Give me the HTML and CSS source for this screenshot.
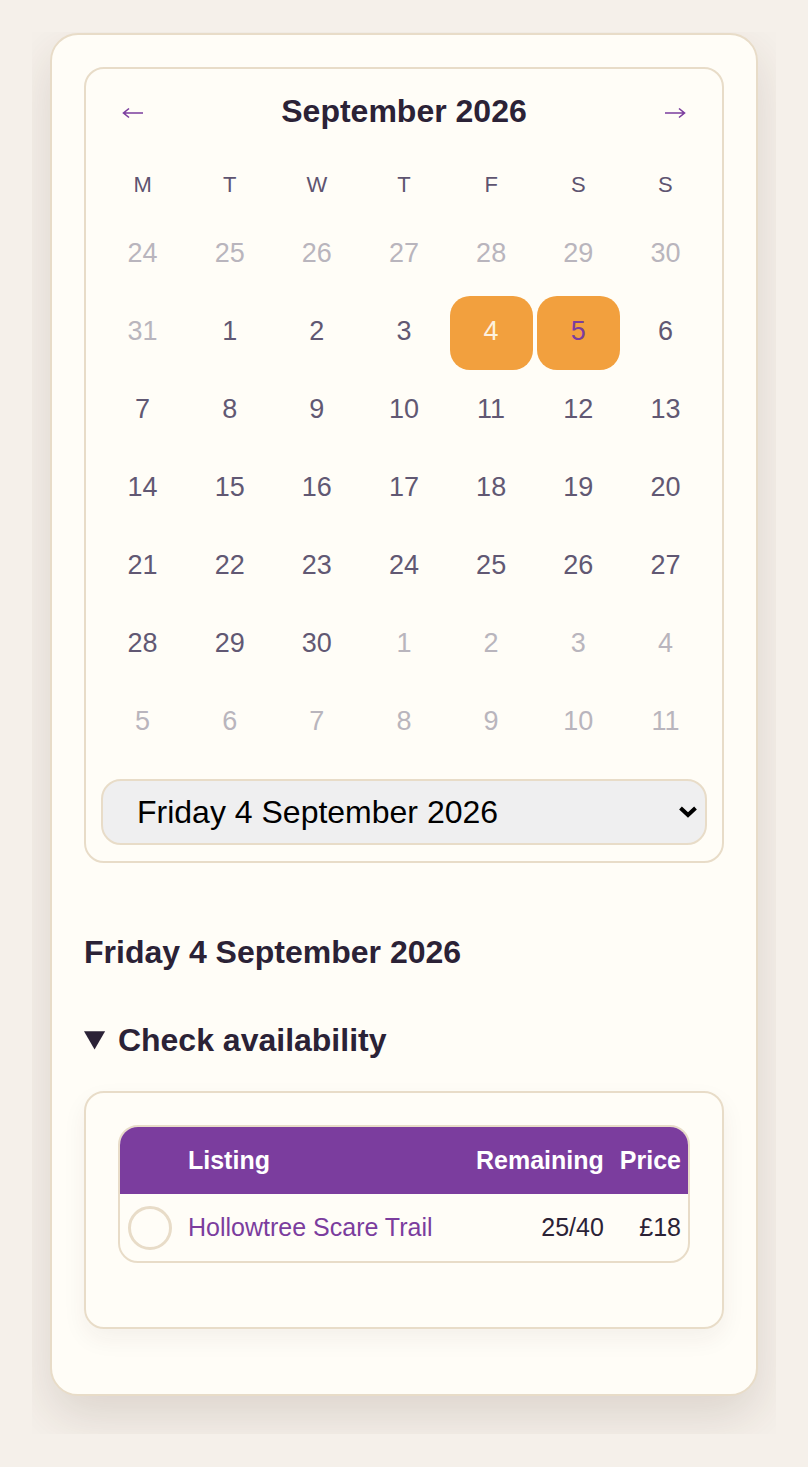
FILE: index.html
```html
<!DOCTYPE html>
<html lang="en">
<head>
    <meta charset="UTF-8">
    <meta name="viewport" content="width=device-width, initial-scale=1.0">
    <title>Book a date</title>
    <link rel="stylesheet" href="styles.css">
</head>
<body>

<div class="page">
    <div class="card">

        <div class="calendar">
            <div class="cal-head">
                <button class="nav" aria-label="Previous month">
                    <svg width="22" height="12" viewBox="0 0 22 12"><path d="M21 6H2M7 1.5L1.5 6L7 10.5" fill="none" stroke="currentColor" stroke-width="1.6"/></svg>
                </button>
                <h1>September 2026</h1>
                <button class="nav" aria-label="Next month">
                    <svg width="22" height="12" viewBox="0 0 22 12"><path d="M1 6H20M15 1.5L20.5 6L15 10.5" fill="none" stroke="currentColor" stroke-width="1.6"/></svg>
                </button>
            </div>

            <div class="weekdays">
                <span>M</span><span>T</span><span>W</span><span>T</span><span>F</span><span>S</span><span>S</span>
            </div>

            <div class="days">
                <span class="out">24</span><span class="out">25</span><span class="out">26</span><span class="out">27</span><span class="out">28</span><span class="out">29</span><span class="out">30</span>
                <span class="out">31</span><span>1</span><span>2</span><span>3</span><span class="picked">4</span><span class="picked alt">5</span><span>6</span>
                <span>7</span><span>8</span><span>9</span><span>10</span><span>11</span><span>12</span><span>13</span>
                <span>14</span><span>15</span><span>16</span><span>17</span><span>18</span><span>19</span><span>20</span>
                <span>21</span><span>22</span><span>23</span><span>24</span><span>25</span><span>26</span><span>27</span>
                <span>28</span><span>29</span><span>30</span><span class="out">1</span><span class="out">2</span><span class="out">3</span><span class="out">4</span>
                <span class="out">5</span><span class="out">6</span><span class="out">7</span><span class="out">8</span><span class="out">9</span><span class="out">10</span><span class="out">11</span>
            </div>

            <div class="select-wrap">
                <select class="date-select">
                    <option>Friday 4 September 2026</option>
                    <option>Saturday 5 September 2026</option>
                </select>
                <svg class="chevron" width="20" height="12" viewBox="0 0 20 12"><path d="M2.5 2L10 9L17.5 2" fill="none" stroke="#000" stroke-width="4"/></svg>
            </div>
        </div>

        <h2>Friday 4 September 2026</h2>

        <details open>
            <summary>Check availability</summary>
            <div class="avail">
                <table>
                    <thead>
                        <tr>
                            <th></th>
                            <th class="name">Listing</th>
                            <th class="num left">Remaining</th>
                            <th class="num">Price</th>
                        </tr>
                    </thead>
                    <tbody>
                        <tr>
                            <td><span class="radio"></span></td>
                            <td class="name"><a href="#">Hollowtree Scare Trail</a></td>
                            <td class="num left">25/40</td>
                            <td class="num">&pound;18</td>
                        </tr>
                    </tbody>
                </table>
            </div>
        </details>

    </div>
</div>

</body>
</html>
```

FILE: styles.css
```css
body {
    font-family: "Liberation Sans", Arial, sans-serif;
    margin: 0;
    background-color: #f5f0ea;
    color: #2b2236;
}
.page {
    margin: 32px 32px 0;
    padding: 1px 18px 38px;
    overflow: hidden;
}
.card {
    background-color: #fffdf7;
    border: 2px solid #e8dcc8;
    border-radius: 28px;
    padding: 32px 32px 65px;
    box-shadow: 0 20px 48px rgba(70, 40, 30, 0.14);
}
.calendar {
    border: 2px solid #e8dcc8;
    border-radius: 20px;
    padding: 15px 15px 16px;
}
.cal-head {
    display: flex;
    align-items: center;
    justify-content: space-between;
    height: 54px;
    margin-bottom: 20px;
}
.cal-head h1 {
    margin: 0;
    font-size: 32px;
    color: #2b2236;
}
.nav {
    width: 64px;
    height: 54px;
    border: none;
    background: none;
    color: #7b3d9e;
    padding: 0;
    display: flex;
    align-items: center;
    justify-content: center;
    cursor: pointer;
}
.nav svg {
    margin-top: 4px;
}
.weekdays,
.days {
    display: grid;
    grid-template-columns: repeat(7, 1fr);
    gap: 4px;
}
.weekdays {
    margin-bottom: 6px;
}
.weekdays span {
    height: 54px;
    display: flex;
    align-items: center;
    justify-content: center;
    font-size: 22px;
    color: #5e5470;
}
.days span {
    height: 70px;
    padding-bottom: 4px;
    display: flex;
    align-items: center;
    justify-content: center;
    font-size: 27px;
    color: #615873;
    border-radius: 20px;
}
.days .out {
    color: #b9b5bd;
}
.days .picked {
    background-color: #f2a03e;
    color: #fdf1de;
}
.days .picked.alt {
    color: #7b3d9e;
}
.select-wrap {
    position: relative;
    margin-top: 19px;
}
.date-select {
    display: block;
    width: 100%;
    height: 66px;
    padding: 0 40px 0 34px;
    font-family: "Liberation Sans", Arial, sans-serif;
    font-size: 32px;
    color: #000;
    background-color: #efeff0;
    border: 2px solid #e8dcc8;
    border-radius: 20px;
    appearance: none;
    -webkit-appearance: none;
}
.chevron {
    position: absolute;
    right: 9px;
    top: 27px;
    pointer-events: none;
}
h2 {
    font-size: 32px;
    margin: 71px 0 0;
    color: #2b2236;
}
details {
    margin-top: 51px;
}
summary {
    font-size: 32px;
    font-weight: bold;
    color: #2b2236;
    cursor: pointer;
}
.avail {
    margin-top: 32px;
    border: 2px solid #e8dcc8;
    border-radius: 20px;
    padding: 32px 32px 64px;
    box-shadow: 0 10px 24px rgba(70, 40, 30, 0.06);
}
table {
    width: 100%;
    border-collapse: separate;
    border-spacing: 0;
    border: 2px solid #e8dcc8;
    border-radius: 20px;
    overflow: hidden;
}
th {
    background-color: #7b3d9e;
    color: #fff;
    font-size: 25px;
    height: 67px;
    padding: 0 7px;
    text-align: left;
}
td {
    font-size: 25px;
    height: 67px;
    padding: 0 7px;
    color: #2b2236;
}
th:first-child,
td:first-child {
    width: 44px;
    padding: 0 9px 0 8px;
}
.num {
    text-align: right;
    white-space: nowrap;
}
.num.left {
    padding-right: 9px;
}
.name {
    width: 100%;
}
.name a {
    color: #7b3d9e;
    text-decoration: none;
}
.radio {
    display: block;
    width: 38px;
    height: 38px;
    border: 3px solid #e8dcc8;
    border-radius: 50%;
    background-color: #fffdf7;
}
```
